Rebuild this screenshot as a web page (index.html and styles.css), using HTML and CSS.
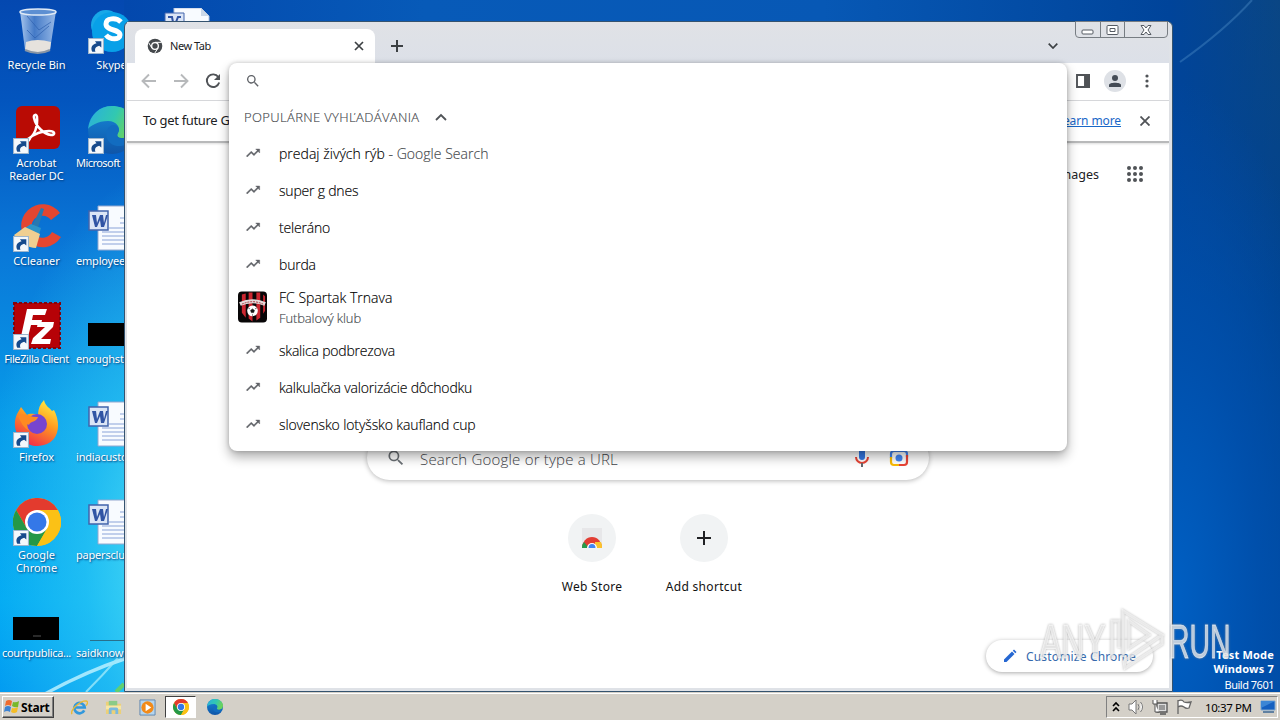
FILE: index.html
```html
<!DOCTYPE html>
<html lang="sk">
<head>
<meta charset="utf-8">
<title>New Tab</title>
<link rel="stylesheet" href="styles.css">
</head>
<body>
<svg class="defs" width="0" height="0">
<defs>
<symbol id="arrow" viewBox="0 0 15 15"><path d="M.5.5h14v14H.5z" fill="#f4f8fc" stroke="#9db5cc"/><path d="M4 13C2 9 4 6 8 5L6.500 3H12.500V9L10.500 7.200C7 8 6 10 7 13z" fill="#164a8c"/></symbol>
<symbol id="trend" viewBox="0 0 24 24"><path d="M16 6l2.300 2.300-4.900 4.900-4-4L2 16.600 3.400 18l6-6 4 4 6.300-6.300L22 12V6z"/></symbol>
<symbol id="search" viewBox="0 0 24 24"><path d="M15.500 14h-.8l-.3-.3A6.500 6.500 0 1 0 13.700 14.400l.3.3v.8l5 5 1.500-1.500zm-6 0a4.500 4.500 0 1 1 0-9 4.500 4.500 0 0 1 0 9z"/></symbol>
<symbol id="chrome" viewBox="0 0 48 48"><circle cx="24" cy="24" r="24" fill="#fbc116"/><path d="M24 12H44.800A24 24 0 0 0 3.200 12L13.600 30z" fill="#e33b2e"/><path d="M3.200 12A24 24 0 0 0 24 48L34.400 30 24 24 13.600 30z" fill="#249847"/><path d="M44.800 12A24 24 0 0 1 24 48L34.400 30A12 12 0 0 0 24 12z" fill="#fbc116"/><circle cx="24" cy="24" r="12" fill="#fff"/><circle cx="24" cy="24" r="9.500" fill="#3478e8"/></symbol>
<linearGradient id="eg" x1="0" y1="0" x2="1" y2=".3"><stop stop-color="#2aaee0"/><stop offset=".6" stop-color="#32c8b0"/><stop offset="1" stop-color="#6bd35c"/></linearGradient>
<linearGradient id="eb" x1="0" y1="0" x2="0" y2="1"><stop stop-color="#1688d8"/><stop offset="1" stop-color="#0f55a8"/></linearGradient>
<symbol id="edge" viewBox="0 0 48 48"><circle cx="24" cy="24" r="24" fill="url(#eb)"/><path d="M0 23C2 8 12 0 24 0c14 0 24 9 24 20 0 8-6 12-13 12-5 0-7-2-5-5 3-5-1-12-10-12C10 15 2 20 0 23z" fill="url(#eg)"/><path d="M30 27c-2 3 0 6 6 6 4 0 8-2 10-3-3 8-9 10-15 10-9 0-15-8-12-16 1-3 4-5 7-5 5 1 6 5 4 8z" fill="#126cc0"/></symbol>
<symbol id="word" viewBox="0 0 48 48"><path d="M10 2h38v44H10z" fill="#f8fbff" stroke="#93a8d0"/><path d="M32 14h14M32 19h14M21 24h25M14 28h32M14 32h32M14 36h32M14 40h32" stroke="#8aa3d8"/><path d="M1 7h19v19H1z" fill="#dbe5f6" stroke="#4264ac" stroke-width="1.500"/><path d="M4 11h4l1 8 3-8h3l1 8 2-8h2l-4 12h-3l-1-7-3 7H7z" fill="#3054a4"/></symbol>
<linearGradient id="ff" x1=".8" y1="0" x2=".3" y2="1"><stop stop-color="#fff044"/><stop offset=".45" stop-color="#ff9a20"/><stop offset="1" stop-color="#f0284c"/></linearGradient>
<linearGradient id="glass" x1="0" x2="1"><stop stop-color="#b9d3f3"/><stop offset=".4" stop-color="#4b7fc9"/><stop offset="1" stop-color="#a6c4ec"/></linearGradient>
</defs>
</svg>
<div class="desktop">
<svg class="wall" viewBox="0 0 1280 720">
<path d="M45 692Q85 670 124 657L124 661Q90 672 52 692z" fill="#b9f0ff" opacity=".85"/>
<path d="M86 692Q102 676 118 658" stroke="#9ce8fa" stroke-width="2" fill="none" opacity=".8"/>
<path d="M116 692l8-8" stroke="#60d070" stroke-width="4"/>
<path d="M1180 62Q1225 30 1252 0" stroke="#5c9cd0" stroke-width="2" fill="none" opacity=".35"/>
</svg>
<div class="icons col1">
<div class="cell"><svg viewBox="0 0 48 48"><path d="M7 3L12 42Q25 48 37 42L43 3z" fill="url(#glass)" opacity=".9"/><path d="M13 34Q24 30 38 34L37 42Q25 48 12 42z" fill="#e6e2dd"/><path d="M14 8l12 14 12-8M14 22l8 8 14-12" stroke="#2d5fae" fill="none" opacity=".7"/><ellipse cx="25" cy="4" rx="18" ry="3" fill="#5d8fd2" stroke="#dfeaf6" stroke-width="1.500"/><path d="M12 42Q25 48 37 42" stroke="#8895a5" stroke-width="2" fill="none"/></svg><span>Recycle Bin</span></div>
<div class="cell"><svg viewBox="0 0 48 48"><rect x="3" width="44" height="43" rx="6" fill="#b90b04"/><path d="M14 34C22 30 25 20 24 11c0-3-4-3-3 1 2 9 10 16 17 17 5 0 4-4-2-4-8 0-16 4-21 8-3 3-1 4 1 1z" fill="none" stroke="#fff" stroke-width="2.500"/><use href="#arrow" y="32" width="16" height="16"/></svg><span>Acrobat<br>Reader DC</span></div>
<div class="cell"><svg viewBox="0 0 48 48"><path d="M47 9A21.500 21.500 0 1 0 48 33L39 28A11 11 0 1 1 38 16z" fill="#e44631"/><path d="M28 4l3 1-6 19-6-2z" fill="#2878b0"/><path d="M18 20l10 4-2 7-14-7z" fill="#2c94c8"/><path d="M12 23l15 7-4 14C15 44 6 38 1 31z" fill="#f0cf91"/><use href="#arrow" y="32" width="16" height="16"/></svg><span>CCleaner</span></div>
<div class="cell"><svg viewBox="0 0 48 48"><rect x="1" y="1" width="46" height="45" fill="#b60207" stroke="#83030a" stroke-width="2" stroke-dasharray="3 2"/><path d="M14 7h20l-2 6H20l-1 5h10l-1 5H18l-4 16H7z" fill="#fff"/><path d="M25 20h16l-1 5-12 12h10l-1 5H18l2-6 12-11h-8z" fill="#fff"/><use href="#arrow" y="32" width="16" height="16"/></svg><span class="fz">FileZilla Client</span></div>
<div class="cell"><svg viewBox="0 0 48 48"><path d="M8 7l6 8c3-2 7-1 11 0 0-6 2-11 6-15 1 6 6 8 8 11l2-1c8 15 5 35-16 36C8 46-3 30 4 14z" fill="url(#ff)"/><circle cx="24" cy="24" r="10" fill="#7745cf"/><path d="M5 16c7-5 12 2 20 1-1 5-8 4-9 8-3-3-2 4 1 6-7-3-9-9-12-15z" fill="#ff8a22"/><use href="#arrow" y="32" width="16" height="16"/></svg><span>Firefox</span></div>
<div class="cell"><svg viewBox="0 0 48 48"><use href="#chrome" width="48" height="48"/><use href="#arrow" y="32" width="16" height="16"/></svg><span>Google<br>Chrome</span></div>
<div class="cell"><svg viewBox="0 0 48 48"><path d="M0 21h46v23H0z"/><path d="M20 40h8" stroke="#555"/></svg><span class="court">courtpublica...</span></div>
</div>
<div class="icons col2">
<div class="cell"><svg viewBox="0 0 48 48"><circle cx="18" cy="17" r="15" fill="#17a8e8"/><circle cx="24" cy="24" r="20" fill="#08a0e8"/><path d="M33 14c-5-5-15-4-15 2 0 7 14 5 14 11 0 5-10 5-14 0" stroke="#fff" stroke-width="5" fill="none"/><use href="#arrow" y="30" width="16" height="16"/></svg><span>Skype</span></div>
<div class="cell"><svg viewBox="0 0 48 48"><use href="#edge" width="48" height="48"/><use href="#arrow" y="32" width="16" height="16"/></svg><span class="start ms">Microsoft</span></div>
<div class="cell"><svg viewBox="0 0 48 48"><use href="#word" width="48" height="48"/></svg><span class="start">employee</span></div>
<div class="cell"><svg viewBox="0 0 48 48"><path d="M0 21h48v23H0z"/></svg><span class="start">enoughsto</span></div>
<div class="cell"><svg viewBox="0 0 48 48"><use href="#word" width="48" height="48"/></svg><span class="start">indiacusto</span></div>
<div class="cell"><svg viewBox="0 0 48 48"><use href="#word" width="48" height="48"/></svg><span class="start">papersclu</span></div>
<div class="cell"><svg viewBox="0 0 48 48"><path d="M2 44.500h46" stroke="#28708c"/></svg><span class="start">saidknowl</span></div>
</div>
<svg class="docpeek" viewBox="0 0 48 14"><path d="M10 0h27l8 8v6H10z" fill="#f8fbff" stroke="#b4c4dc"/><path d="M37 0v8h8" fill="#cbd8e8"/><path d="M1 5h19v9H1z" fill="#dbe5f6" stroke="#4264ac"/><path d="M4 9h4l1 5M12 14l2-5h3" stroke="#3054a4" stroke-width="2" fill="none"/></svg>

<main class="window">
<header class="strip">
<div class="tab"><svg viewBox="0 0 24 24"><circle cx="12" cy="12" r="11" fill="#45494d"/><circle cx="12" cy="12" r="5" fill="#45494d" stroke="#fff" stroke-width="2"/><path d="M12 6.500h10M7.200 15L2.500 7M16.500 15l-5 8" stroke="#fff" stroke-width="1.500"/></svg><span>New Tab</span><svg class="x" viewBox="0 0 10 10"><path d="M1 1l8 8M9 1L1 9"/></svg></div>
<svg class="plus" viewBox="0 0 12 12"><path d="M6 0v12M0 6h12"/></svg>
<svg class="down" viewBox="0 0 10 6"><path d="M.7.700L5 5 9.300.700"/></svg>
</header>
<div class="controls"><i><svg viewBox="0 0 14 12"><rect x="1" y="6" width="11" height="4" rx="1"/></svg></i><i><svg viewBox="0 0 14 12"><rect x="1" y="1.500" width="11" height="9" rx="1"/><path d="M4 4.500h5v3H4z"/></svg></i><i><svg viewBox="0 0 14 12"><path d="M2 1.500h3l2 2.500 2-2.500h3L9 6l3 4.500H9L7 8l-2 2.500H2L5 6z"/></svg></i></div>
<nav class="toolbar">
<svg class="dim" viewBox="0 0 16 16"><path d="M15 8H2M8 1.500L1.500 8 8 14.500"/></svg>
<svg class="dim" viewBox="0 0 16 16"><path d="M1 8h13M8 1.500L14.500 8 8 14.500"/></svg>
<svg viewBox="0 0 16 16"><path d="M13.300 4A6.300 6.300 0 1 0 14.200 9.500"/><path d="M15 1v6H9z" fill="#505357" stroke="none"/></svg>
<svg class="panel" viewBox="0 0 14 14"><path d="M1 1h12v12H1z"/><path d="M9 1h4v12H9z" fill="#505357"/></svg>
<div class="avatar"><svg viewBox="0 0 14 14"><circle cx="7" cy="4" r="3" /><path d="M1 13v-2c0-3 12-3 12 0v2z"/></svg></div>
<svg class="dots" viewBox="0 0 4 14"><circle cx="2" cy="2" r="1.600"/><circle cx="2" cy="7" r="1.600"/><circle cx="2" cy="12" r="1.600"/></svg>
</nav>
<div class="infobar"><span class="notice">To get future G</span><a>Learn more</a><svg viewBox="0 0 10 10"><path d="M.5.500l9 9M9.500.500l-9 9"/></svg></div>
<section class="page">
<div class="top"><span>Images</span><svg viewBox="0 0 16 16"><g id="r"><circle cx="2" cy="2" r="2"/><circle cx="8" cy="2" r="2"/><circle cx="14" cy="2" r="2"/></g><use href="#r" y="6"/><use href="#r" y="12"/></svg></div>
<div class="box"><svg class="mag"><use href="#search"/></svg><span>Search Google or type a URL</span>
<svg class="mic" viewBox="0 0 16 20"><rect x="5" y="0" width="6" height="12" rx="3" fill="#3578e5"/><path d="M2 9a6 6 0 0 0 12 0" stroke="#e84435" stroke-width="2" fill="none"/><path d="M8 15v4" stroke="#616970" stroke-width="2"/></svg>
<svg class="lens" viewBox="0 0 20 20"><path d="M2 10V6q0-3 3-3h10q3 0 3 3v3" stroke="#4285f4" fill="none" stroke-width="2.200"/><path d="M2 9v5q0 3 3 3h5" stroke="#fbbc04" fill="none" stroke-width="2.200"/><path d="M18 7v7q0 3-3 3h-5" stroke="#ea4335" fill="none" stroke-width="2.200"/><circle cx="10" cy="10" r="3.500" fill="#4285f4"/></svg></div>
<div class="tiles">
<div class="tile"><b><svg viewBox="0 0 20 20"><path d="M0 0h20v20H0z" fill="#e7e7e9"/><path d="M0 20a10 11 0 0 1 20 0z" fill="#e23d33"/><path d="M0 20q0-4 2-6l5 6z" fill="#279a4a"/><path d="M13 14h6q1 2 1 6h-7z" fill="#fbc22d"/><path d="M5 20a5 5 0 0 1 10 0z" fill="#fff"/><path d="M6.500 20a3.500 4 0 0 1 7 0z" fill="#4285f4"/></svg></b><span>Web Store</span></div>
<div class="tile"><b><svg viewBox="0 0 20 20"><path d="M10 3v14M3 10h14" stroke="#202124" stroke-width="2"/></svg></b><span>Add shortcut</span></div>
</div>
<div class="customize"><svg viewBox="0 0 14 14"><path d="M1 10.500L9 2.500l2.500 2.500-8 8H1zM9.800 1.700L11 .5 13.500 3l-1.200 1.200z" fill="#2567d2"/></svg><span>Customize Chrome</span></div>
</section>
</main>

<section class="popup">
<div class="query"><svg><use href="#search"/></svg></div>
<div class="heading"><span>POPULÁRNE VYHĽADÁVANIA</span><svg viewBox="0 0 12 8"><path d="M1 7l5-5 5 5"/></svg></div>
<div class="row first"><svg><use href="#trend"/></svg><span>predaj živých rýb <em>- Google Search</em></span></div>
<div class="row"><svg><use href="#trend"/></svg><span>super g dnes</span></div>
<div class="row"><svg><use href="#trend"/></svg><span>teleráno</span></div>
<div class="row"><svg><use href="#trend"/></svg><span>burda</span></div>
<div class="row tall"><svg class="club" viewBox="0 0 30 32"><rect width="30" height="32" rx="4" fill="#080607"/><path d="M4 3l4-1v25l-4-5zM11 1h4v30l-4-3zM19 1h4v26l-4 3zM26 3l2 2v15l-2 3z" fill="#cb2630"/><path d="M2 13Q15 7 28 13" stroke="#e5dcdc" stroke-width="4" fill="none"/><path d="M4 13Q15 8 26 13" stroke="#a3343b" stroke-width="1" stroke-dasharray="2 1" fill="none"/><circle cx="15" cy="20" r="5.500" fill="#fff"/><path d="M15 18l2 1.500-.8 2.300h-2.400l-.8-2.300zM10.500 17l2 1M19.500 17l-2 1M15 25v-1.500" fill="#151515" stroke="#151515"/></svg><span>FC Spartak Trnava<em>Futbalový klub</em></span></div>
<div class="row"><svg><use href="#trend"/></svg><span>skalica podbrezova</span></div>
<div class="row"><svg><use href="#trend"/></svg><span>kalkulačka valorizácie dôchodku</span></div>
<div class="row last"><svg><use href="#trend"/></svg><span>slovensko lotyšsko kaufland cup</span></div>
</section>

<div class="build"><strong>Test Mode</strong><strong>Windows 7</strong><span>Build 7601</span></div>
<div class="mark"><span class="any">ANY</span><svg viewBox="0 0 56 64"><path d="M3 51V13h7v27M14 49V3L53 27 15 53l1 7L53 36V28M20 13v27l20-13z" fill="none" stroke="currentColor" stroke-width="3"/></svg><span class="run">RUN</span></div>

<footer class="taskbar">
<div class="startbtn"><svg viewBox="0 0 16 16"><path d="M2 2q3-2 6 0L7 7Q4 5 1 7z" fill="#ef6b2e"/><path d="M9 3q3 1 6-1l-1 6q-3 1-6-1z" fill="#77b82b"/><path d="M1 8q3-2 6 0l-1 5q-3-2-6 0z" fill="#3d83d2"/><path d="M8 9q3 1 6-1l-1 5q-3 2-6 0z" fill="#f5bd25"/></svg><span>Start</span></div>
<svg class="task ie" viewBox="0 0 18 18"><path d="M14 12A5.500 5.500 0 1 1 14.500 9H5" fill="none" stroke="#3198dc" stroke-width="2.800"/><path d="M1 16C-1 12 9 2 16 2q3 1 0 5" fill="none" stroke="#e9ba35" stroke-width="1.500"/></svg>
<svg class="task" viewBox="0 0 18 18"><path d="M1 3h6l2 2h8v11H1z" fill="#ecd078"/><path d="M4 2h9v5H4z" fill="#8acb88"/><path d="M1 7h16v4H1z" fill="#f8e7a5"/><path d="M4 16v-5q0-2 2-2h6q2 0 2 2v5h-3v-4H7v4z" fill="#7bb9df"/></svg>
<svg class="task" viewBox="0 0 18 18"><path d="M1 1h16v16H1z" fill="#b5d5ee" stroke="#6086ae"/><circle cx="9" cy="9" r="6.500" fill="#f28a18"/><path d="M7 5l6 4-6 4z" fill="#fff"/></svg>
<div class="active"><svg viewBox="0 0 48 48"><use href="#chrome"/></svg></div>
<svg class="task edge" viewBox="0 0 48 48"><use href="#edge"/></svg>
<div class="tray"><svg class="chev" viewBox="0 0 8 12"><path d="M1 5l3-3 3 3M1 10l3-3 3 3" stroke="#000" stroke-width="1.600" fill="none"/></svg><svg viewBox="0 0 16 16"><path d="M1 5h3l4-4v14l-4-4H1zM10 5q2 3 0 6M12.500 3q4 5 0 10" fill="#fff" stroke="#777"/></svg><svg viewBox="0 0 16 16"><path d="M5 4h10v9H5zM8 15h6" fill="#ddd" stroke="#555" stroke-width="1.300"/><path d="M7 6h6v5H7z" fill="#999"/><path d="M1 1v4h4V1M3 5v8h4" stroke="#555" fill="#fff"/></svg><svg viewBox="0 0 16 16"><path d="M2 1v14M2 2q4-2 6 1 3 1 7 0l-2 6q-3 1-5-1-3-2-6 0" stroke="#666" fill="#fff" stroke-width="1.300"/></svg><time>10:37 PM</time><svg class="monitor" viewBox="0 0 16 14"><path d="M1 1h14v9H1z" fill="#1560c0" stroke="#7ea7cf"/><path d="M1 1h14L1 8z" fill="#3c86d5"/><path d="M3 12h11" stroke="#6181a1" stroke-width="2"/></svg></div>
</footer>
</div>
</body>
</html>
```
FILE: styles.css
```css
*{box-sizing:border-box}
body{margin:0;width:1280px;height:720px;overflow:hidden;font:12px "Noto Sans","DejaVu Sans",sans-serif;color:#202124}
.defs{position:absolute}
svg{display:block;flex:none}
em{font-style:normal}
.desktop{position:relative;width:1280px;height:720px;overflow:hidden;background:radial-gradient(ellipse 210px 400px at 190px 560px,rgba(91,229,244,.95),rgba(50,205,245,.6) 50%,transparent),linear-gradient(#0448b0,#0355be 100px,#0a78d8 250px,#079be9 420px,#00a8f3 600px,#0095f0)}
.desktop::before{content:"";position:absolute;left:1170px;top:0;width:110px;height:692px;background:radial-gradient(ellipse 180px 520px at 0 600px,#0060c4,rgba(0,82,176,.8) 50%,transparent),linear-gradient(90deg,#00449a,rgba(0,68,154,0)),linear-gradient(#0a4684,#00428e 300px,#00469c)}
.desktop::after{content:"";position:absolute;left:124px;top:0;width:1046px;height:22px;background:linear-gradient(90deg,#0348ad,#075ab8 300px,#0758b5 700px,#00449a)}
.wall{position:absolute;inset:0;z-index:1}
.icons{position:absolute;top:8px;width:75px;z-index:2;color:#fff;font-size:11px;line-height:13px;text-shadow:1px 1px 2px #003a78}
.col1{left:-1px}.col2{left:74px}
.cell{height:98px;display:flex;flex-direction:column;align-items:center;text-align:center;gap:2px;white-space:nowrap}
.cell svg{width:48px;height:48px}
.cell .fz{letter-spacing:-.4px}
.cell .court{letter-spacing:-.3px}
.start{align-self:flex-start;padding-left:2px;letter-spacing:-.2px}
.cell .ms{letter-spacing:-.55px}
.docpeek{position:absolute;left:164px;top:8px;width:48px;height:14px;z-index:3}
.window{position:absolute;z-index:4;left:124px;top:21px;width:1049px;height:671px;border:1px solid #35536f;border-radius:6px 6px 0 0;background:#dfe2e7;padding:0 3px 3px 2px;display:flex;flex-direction:column}
.strip{height:41px;padding:7px 0 0 8px;display:flex;align-items:flex-start;background:linear-gradient(#e0e2e6,#dce0e8)}
.tab{width:240px;height:34px;border-radius:8px 8px 0 0;background:#fff;display:flex;align-items:center;padding:0 12px;font-size:11px}
.tab span{padding-bottom:2px;letter-spacing:-.45px}
.tab svg{width:16px;height:16px;margin-right:7px}
.tab .x{width:10px;height:10px;margin:0 -1px 0 auto;stroke:#3c4043;stroke-width:1.700}
.plus{width:12px;height:12px;margin:11px 0 0 16px;stroke:#3c4043;stroke-width:2}
.down{width:10px;height:6px;margin:14px 111px 0 auto;fill:none;stroke:#3c4043;stroke-width:1.700}
.controls{position:absolute;right:4px;top:-1px;width:93px;height:17px;display:flex;border:1px solid #777d83;border-radius:0 0 4px 4px}
.controls i{width:25px;display:flex;align-items:center;justify-content:center;border-right:1px solid #777d83}
.controls i:last-child{width:42px;border:0}
.controls svg{width:14px;height:12px;fill:#fff;stroke:#555b63}
.toolbar{height:38px;background:#fff;border-bottom:1px solid #d5d7da;display:flex;align-items:center;padding:0 20px 1px 14px;gap:16px}
.toolbar svg{width:16px;height:16px;fill:none;stroke:#505357;stroke-width:1.900}
.toolbar .dim{stroke:#b7b9bb}
.toolbar .panel{width:14px;height:14px;margin-left:auto}
.avatar{width:22px;height:22px;border-radius:50%;background:#dee1e6;display:flex;align-items:center;justify-content:center;margin-left:-2px}
.toolbar .avatar svg{width:14px;height:14px;fill:#454c56;stroke:none}
.toolbar .dots{width:4px;height:14px;fill:#505357;stroke:none;margin-left:3px}
.infobar{position:relative;height:42px;background:#fff;border-bottom:2px solid #b8b9ba;display:flex;align-items:center;padding:0 19px 1px 16px;font-size:13px;box-shadow:0 1px 2px #ddd}
.notice{letter-spacing:-.33px;padding-bottom:1px}
.infobar a{margin-left:auto;color:#1967c8;text-decoration:underline;font-size:12px;letter-spacing:-.1px}
.infobar svg{width:10px;height:10px;margin-left:19px;stroke:#505357;stroke-width:1.800}
.page{flex:1;background:#fff;display:flex;flex-direction:column;align-items:center;min-height:0}
.top{align-self:stretch;height:62px;display:flex;justify-content:flex-end;align-items:center;gap:28px;padding-right:26px;font-size:12.500px}
.top svg{width:16px;height:16px;fill:#505357}
.box{width:562px;height:45px;margin-top:230px;border-radius:23px;background:#fff;box-shadow:0 1px 5px #b8b8b8;display:flex;align-items:center;padding:0 20px 0 19px;font-size:15px;color:#3f4348}
.box span{font-family:"Open Sans","Noto Sans",sans-serif;font-weight:300;letter-spacing:.2px;padding-top:3px}
.mag{width:20px;height:20px;fill:#6b7075;margin-right:14px}
.mic{width:16px;height:20px;margin-left:auto;margin-right:19px}
.lens{width:20px;height:20px}
.tiles{display:flex;margin-top:34px;font-size:12px;color:#111}
.tile{width:112px;display:flex;flex-direction:column;align-items:center;gap:16px;white-space:nowrap;letter-spacing:.3px}
.tile b{width:48px;height:48px;border-radius:50%;background:#f1f3f4;display:flex;align-items:center;justify-content:center}
.tile svg{width:20px;height:20px}
.customize{align-self:flex-end;margin:auto 16px 16px 0;width:167px;height:32px;border-radius:16px;box-shadow:0 1px 4px #aaa;display:flex;align-items:center;padding-left:17px;gap:9px;color:#3569ad;font-size:12px;letter-spacing:.17px}
.customize svg{width:14px;height:14px}
.popup{position:absolute;z-index:5;left:229px;top:63px;width:838px;height:388px;border-radius:8px;background:#fff;box-shadow:0 6px 12px rgba(0,0,0,.32),0 0 4px rgba(0,0,0,.2);font:300 14px "Open Sans","Noto Sans",sans-serif;color:#000;white-space:nowrap;letter-spacing:-.2px;-webkit-text-stroke:.15px}
.query{height:35px;padding:10px 16px}
.query svg{width:16px;height:16px;fill:#606368}
.heading{height:37px;display:flex;align-items:center;padding-left:15px;gap:15px;color:#45484c;font-size:13px;letter-spacing:.36px}
.heading svg{width:12px;height:8px;fill:none;stroke:#505357;stroke-width:1.800}
.row{height:37px;display:flex;align-items:center;padding-left:16px}
.row svg{width:16px;height:16px;margin:0 18px 2px 0;fill:#606368;stroke:#606368;stroke-width:.6}
.row em{color:#45494d}
.first{letter-spacing:.03px}
.last{letter-spacing:-.12px}
.tall{height:49px;padding-left:9px;line-height:20px;letter-spacing:.02px}
.tall em{display:block;font-size:13px;letter-spacing:-.12px}
.tall .club{width:29px;height:32px;margin-right:12px;stroke:none}
.build{position:absolute;z-index:6;right:6px;top:648px;display:flex;flex-direction:column;align-items:flex-end;color:#fff;font-size:11px;line-height:14px}
.build strong{letter-spacing:.2px}
.build span{padding-top:2px;letter-spacing:-.5px}
.mark{position:absolute;z-index:7;left:1040px;top:608px;width:190px;height:64px;color:rgba(255,255,255,.62);filter:drop-shadow(0 0 1px #8e8e8e);font:49px/66px "Liberation Sans",sans-serif;-webkit-text-stroke:.8px}
.mark span{position:absolute;left:0;top:0;transform:scaleX(.65);transform-origin:0 0}
.mark .run{left:129px;transform:scaleX(.58)}
.mark svg{position:absolute;left:69px;top:0;width:56px;height:64px}
.taskbar{position:absolute;z-index:8;left:0;top:692px;width:1280px;height:28px;background:#d4d0c8;border-top:1px solid #d4d0c8;box-shadow:inset 0 1px #fff;display:flex;align-items:center;padding:1px 2px 0}
.startbtn{width:52px;height:22px;border:1px solid;border-color:#fff #404040 #404040 #fff;box-shadow:inset -1px -1px #808080;display:flex;align-items:center;gap:1px;padding-left:1px;font-weight:bold;font-size:12px;letter-spacing:-.2px;color:#000}
.startbtn svg{width:16px;height:16px}
.task{width:17px;height:17px;margin-left:17px}
.active{width:31px;height:22px;margin-left:9px;background:#fff;border:1px solid;border-color:#404040 #fff #fff #404040;display:flex;align-items:center;justify-content:center}
.active svg{width:16px;height:16px}
.task.edge{width:16px;height:16px;margin-left:11px}
.tray{margin-left:auto;width:172px;height:22px;border:1px solid;border-color:#808080 #fff #fff #808080;display:flex;align-items:center;padding-left:5px;gap:8px;color:#000;font-size:11.500px;white-space:nowrap}
.tray svg{width:16px;height:16px}
.tray .chev{width:8px;height:12px}
.tray time{width:47px;margin-left:5px;letter-spacing:-.4px}
.tray .monitor{height:14px}
```
